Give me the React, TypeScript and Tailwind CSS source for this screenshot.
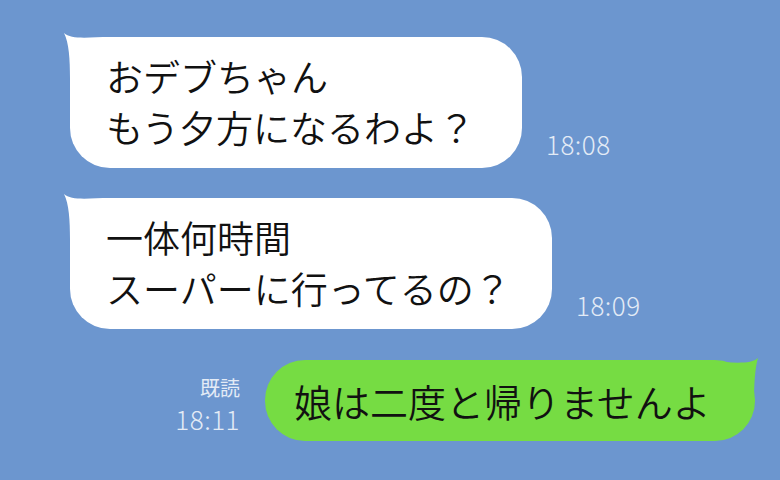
import React from "react";

const jp = { fontFamily: '"Noto Sans CJK JP", "Noto Sans", sans-serif' };

function LeftTail() {
    return (
        <svg
            className="absolute left-[-8px] top-[-6px]"
            width="50"
            height="50"
            viewBox="0 0 50 50"
        >
            <path d="M2 2 C9 9 28 6 48 6 L48 48 L8 48 C8 28 7 12 2 2 Z" fill="#ffffff" />
        </svg>
    );
}

function RightTail() {
    return (
        <svg
            className="absolute right-[-5px] top-[-4px]"
            width="50"
            height="50"
            viewBox="0 0 50 50"
        >
            <path d="M48 2 C41 9 22 6 2 6 L2 48 L44 48 C44 28 45 12 48 2 Z" fill="#76dc43" />
        </svg>
    );
}

function Incoming({ lines, time, width }: { lines: string[]; time: string; width: string }) {
    return (
        <div className="flex items-end gap-[24px]">
            <div className={`relative ${width} h-[131px] bg-white rounded-[40px] pl-[36px] py-[14px]`}>
                <LeftTail />
                <div className="relative text-[37px] leading-[51px] font-[350] text-[#111] whitespace-nowrap" style={jp}>
                    {lines.map((l) => (
                        <div key={l}>{l}</div>
                    ))}
                </div>
            </div>
            <span className="mb-[9px] text-[26px] leading-[30px] tracking-[0.5px] font-light text-[#e3ebf6]" style={jp}>
                {time}
            </span>
        </div>
    );
}

export default function App() {
    return (
        <div className="w-[780px] h-[480px] bg-[#6c96cf] flex flex-col overflow-hidden">
            <div className="pl-[70px] pt-[37px]">
                <Incoming lines={["おデブちゃん", "もう夕方になるわよ？"]} time="18:08" width="w-[452px]" />
            </div>
            <div className="pl-[70px] mt-[30px]">
                <Incoming lines={["一体何時間", "スーパーに行ってるの？"]} time="18:09" width="w-[482px]" />
            </div>
            <div className="flex justify-end items-end gap-[25px] pr-[25px] mt-[31px]">
                <div className="flex flex-col items-end mb-[6px] text-[#e3ebf6] font-light" style={jp}>
                    <span className="text-[20px] leading-[30px] font-normal">既読</span>
                    <span className="text-[26px] leading-[32px] tracking-[0.5px]">18:11</span>
                </div>
                <div className="relative w-[490px] h-[81px] bg-[#76dc43] rounded-[40px] pl-[29px] flex items-center">
                    <RightTail />
                    <span className="relative text-[38px] leading-[50px] font-[350] text-[#111] whitespace-nowrap" style={jp}>
                        娘は二度と帰りませんよ
                    </span>
                </div>
            </div>
        </div>
    );
}
